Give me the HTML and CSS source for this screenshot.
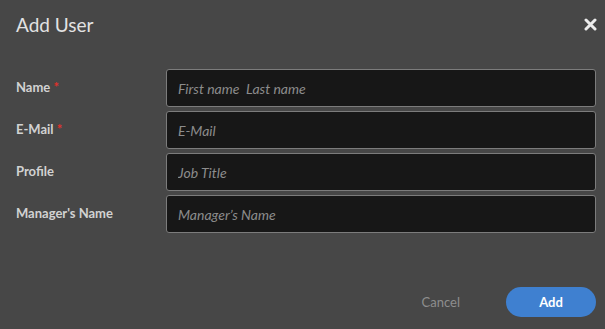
FILE: index.html
```html
<!DOCTYPE html>
<html lang="en">
<head>
    <meta charset="UTF-8">
    <title>Add User</title>
    <link rel="stylesheet" href="styles.css">
</head>
<body>
    <div class="dialog">
        <div class="dialog-header">
            <h1 class="dialog-title">Add User</h1>
            <button class="dialog-close" aria-label="Close">
                <svg width="13" height="13" viewBox="0 0 13 13">
                    <path d="M2 2 L11 11 M11 2 L2 11" stroke="#ececec" stroke-width="3" stroke-linecap="round"/>
                </svg>
            </button>
        </div>

        <form class="user-form">
            <div class="form-row">
                <label class="form-label">Name <span class="required">*</span></label>
                <input class="form-input" type="text" placeholder="First name  Last name">
            </div>
            <div class="form-row">
                <label class="form-label">E-Mail <span class="required">*</span></label>
                <input class="form-input" type="text" placeholder="E-Mail">
            </div>
            <div class="form-row">
                <label class="form-label">Profile</label>
                <input class="form-input" type="text" placeholder="Job Title">
            </div>
            <div class="form-row">
                <label class="form-label">Manager's Name</label>
                <input class="form-input" type="text" placeholder="Manager’s Name">
            </div>
        </form>

        <div class="dialog-footer">
            <button class="btn btn-link">Cancel</button>
            <button class="btn btn-primary">Add</button>
        </div>
    </div>
</body>
</html>
```

FILE: styles.css
```css
* {
    margin: 0;
    padding: 0;
    box-sizing: border-box;
}

body {
    font-family: Lato, "Open Sans", sans-serif;
    background: #474747;
    color: #d6d6d6;
    width: 605px;
    height: 329px;
    overflow: hidden;
}

.dialog {
    display: flex;
    flex-direction: column;
    height: 329px;
}

.dialog-header {
    display: flex;
    align-items: center;
    justify-content: space-between;
    height: 48px;
    padding: 0 8px 0 16px;
}

.dialog-title {
    font-size: 19px;
    font-weight: 400;
    color: #e2e2e2;
}

.dialog-close {
    background: none;
    border: none;
    cursor: pointer;
    display: flex;
    padding: 0;
}

.user-form {
    display: flex;
    flex-direction: column;
    gap: 4px;
    padding: 21px 9px 0 16px;
}

.form-row {
    display: grid;
    grid-template-columns: 150px 1fr;
    align-items: center;
}

.form-label {
    font-size: 13px;
    font-weight: 700;
    color: #d2d2d2;
    padding-bottom: 2px;
}

.required {
    color: #e2312b;
}

.form-input {
    height: 38px;
    background: #171717;
    border: 1px solid #7c7c7c;
    border-radius: 3px;
    padding: 0 11px;
    font-family: inherit;
    font-size: 14px;
    color: #ddd;
    outline: none;
}

.form-input::placeholder {
    color: #8c8c8c;
    font-style: italic;
}

.dialog-footer {
    margin-top: auto;
    display: flex;
    justify-content: flex-end;
    align-items: center;
    gap: 46px;
    padding: 0 9px 12px 0;
}

.btn {
    font-family: inherit;
    font-size: 13px;
    border: none;
    cursor: pointer;
}

.btn-link {
    background: none;
    color: #8e8e8e;
}

.btn-primary {
    width: 90px;
    height: 30px;
    border-radius: 15px;
    background: #3f80d0;
    color: #fff;
    font-weight: 700;
}
```
